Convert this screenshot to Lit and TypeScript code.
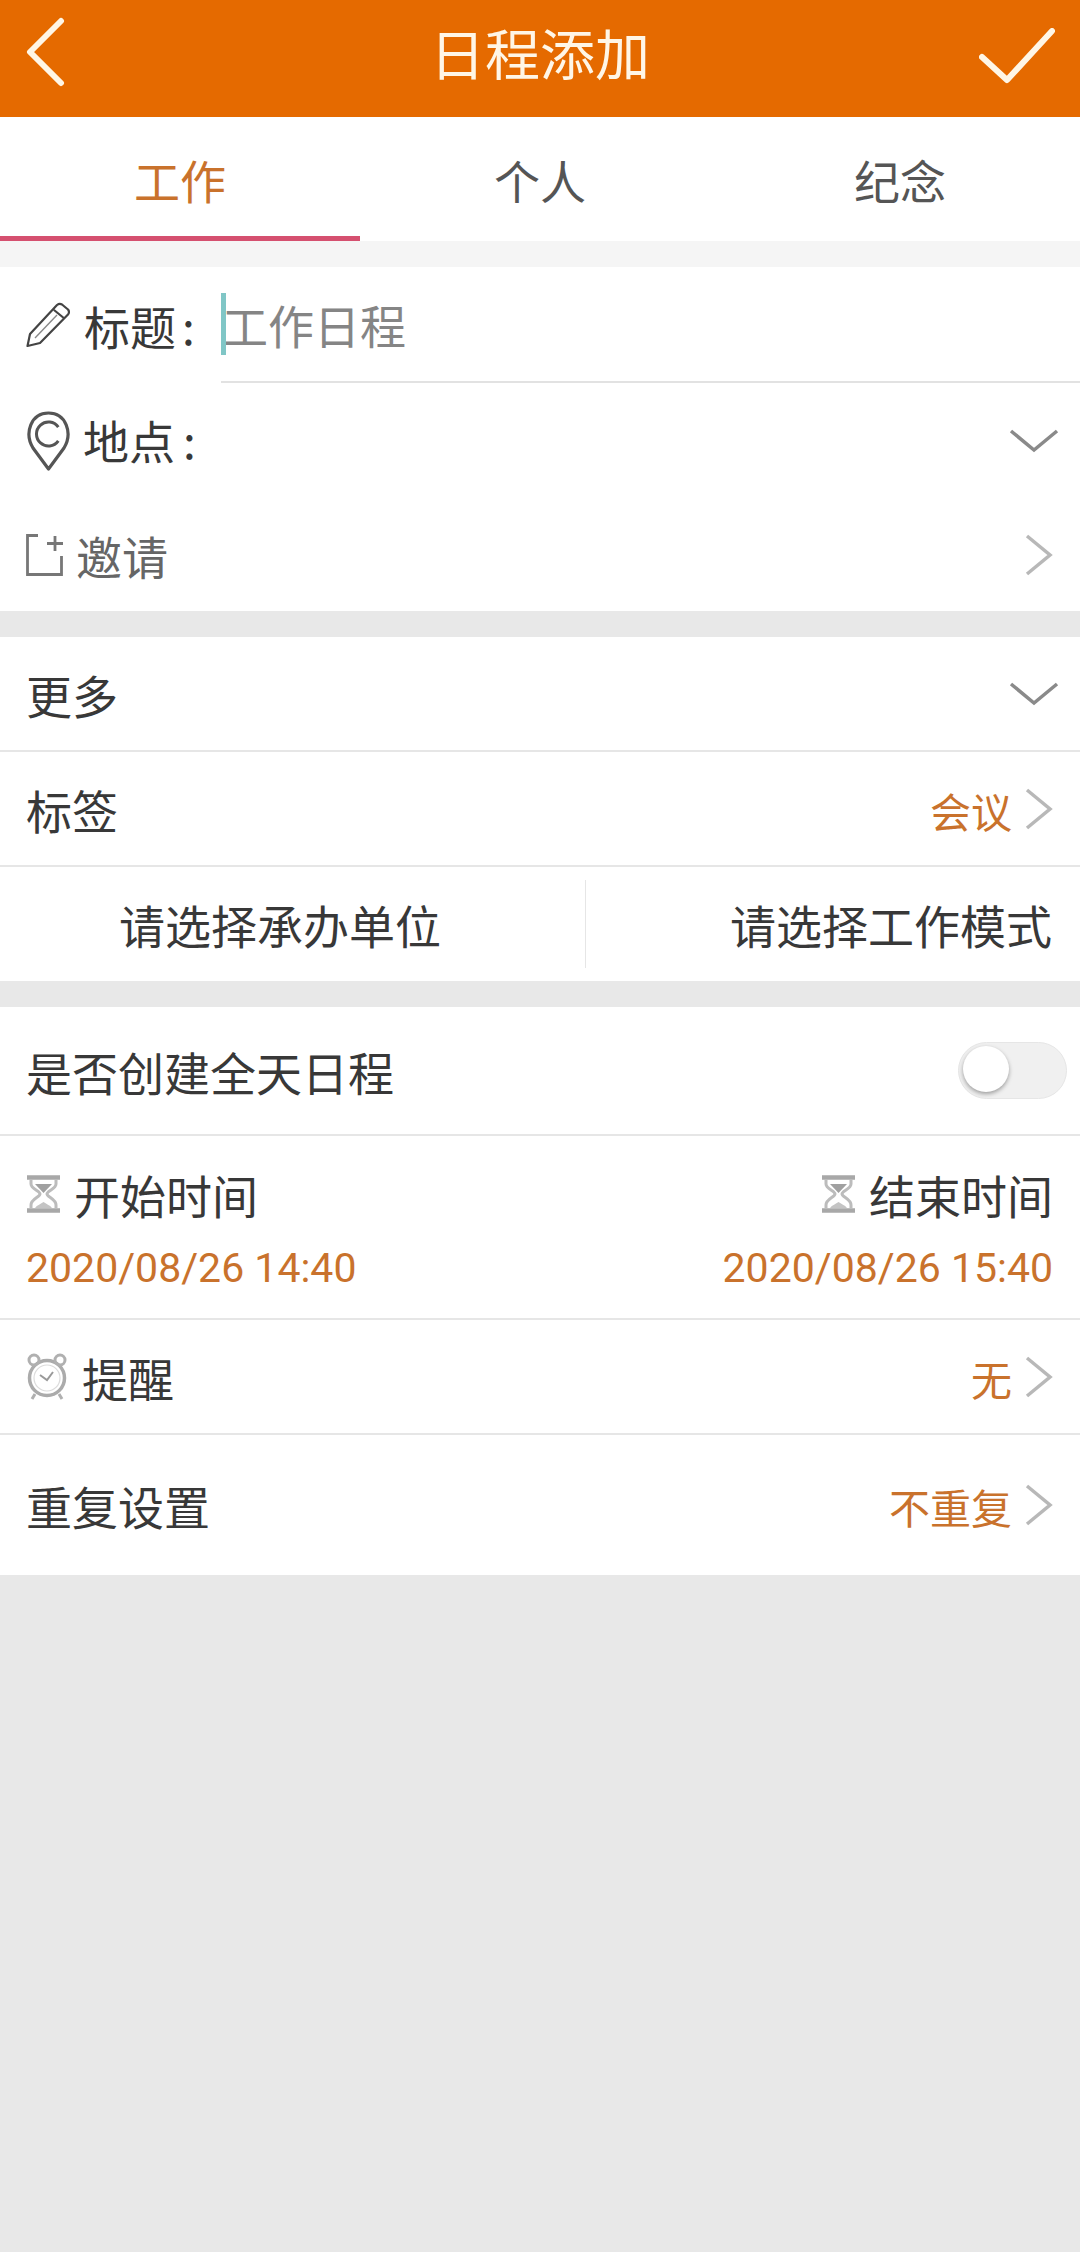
import { LitElement, html, css, svg } from "lit";
import { customElement } from "lit/decorators.js";

const chevron = svg`<svg class="chev" width="28" height="42" viewBox="0 0 28 42"><path d="M2 2 L25 21 L2 40" fill="none" stroke="#b8b8b8" stroke-width="3.500"/></svg>`;
const down = svg`<svg class="down" width="50" height="26" viewBox="0 0 50 26"><path d="M2 3 L25 22 L48 3" fill="none" stroke="#8a8a8a" stroke-width="3.500"/></svg>`;
const hourglass = svg`<svg class="hg" width="35" height="38" viewBox="0 0 35 38"><path d="M1 2.500H34M1 35.500H34" stroke="#a8a8a8" stroke-width="4.500"/><path d="M5 4V9C5 14 14 16 14 19C14 22 5 24 5 30V34M30 4V9C30 14 21 16 21 19C21 22 30 24 30 30V34" fill="none" stroke="#bcbcbc" stroke-width="3"/><path d="M9 9H26L17.500 18Z" fill="#a0a0a0"/><path d="M9 33C11 30 15 29 17.500 27C20 29 24 30 26 33Z" fill="#c4c4c4"/></svg>`;

@customElement("app-root")
export class AppRoot extends LitElement {
  static styles = css`
    :host {
      display: block;
      width: 1080px;
      height: 2252px;
      background: #e8e8e8;
      font-family: "Noto Sans CJK SC", "Noto Sans", sans-serif;
      color: #383838;
      font-size: 46px;
      overflow: hidden;
    }
    svg { display: block; flex: none; }
    .bar {
      height: 117px;
      background: #e56a00;
      color: #fff6e6;
      display: flex;
      align-items: center;
      padding: 0 25px;
    }
    .side { width: 76px; flex: none; display: flex; }
    .side.back { margin-top: -11px; }
    .side.ok { margin-top: -6px; }
    .title { flex: 1; text-align: center; font-size: 55px; line-height: 1; margin-top: -14px; }
    .tabs { height: 124px; background: #fff; display: flex; }
    .tab {
      flex: 1;
      display: flex;
      align-items: center;
      justify-content: center;
      color: #555;
      box-sizing: border-box;
      height: 124px;
      padding-top: 4px;
      padding-bottom: 5px;
    }
    .tab.on {
      color: #c9722c;
      border-bottom: 5px solid #d5506f;
      padding-bottom: 0;
    }
    .strip { height: 26px; background: #f5f5f5; }
    .gap { height: 26px; }
    .card { background: #fff; }
    .row {
      display: flex;
      align-items: center;
      padding: 0 27px 0 26px;
      height: 115px;
      border-bottom: 2px solid #e6e6e6;
      box-sizing: border-box;
    }
    .grow { flex: 1; }
    .val { color: #c9722c; font-size: 41px; margin-right: 13px; margin-top: 2px; }
    .first { height: 344px; display: flex; flex-direction: column; }
    .titleRow { height: 116px; display: flex; padding-left: 26px; }
    .lab { display: flex; align-items: center; height: 116px; width: 195px; flex: none; }
    .input {
      flex: 1;
      height: 116px;
      border-bottom: 2px solid #e2e2e2;
      box-sizing: border-box;
      position: relative;
      display: flex;
      align-items: center;
      color: #858585;
      padding-left: 1px;
    }
    .caret {
      position: absolute;
      left: 0;
      top: 26px;
      width: 5px;
      height: 62px;
      background: #80c6c6;
    }
    .mt { margin-left: 14px; }
    .colon { margin-left: 6px; }
    .loc { height: 116px; padding: 0 21px 0 26px; display: flex; align-items: center; }
    .loc .mt { margin-left: 12px; margin-top: -4px; }
    .loc .colon { margin-top: -4px; margin-left: 8px; }
    .inv { height: 112px; padding: 0 27px 0 26px; display: flex; align-items: center; color: #666; }
    .inv .lbl { margin-left: 13px; }
    .more { padding-right: 21px; }
    .split { padding: 0; height: 114px; border-bottom: none; }
    .s1 { width: 560px; margin-right: 25px; text-align: center; flex: none; }
    .divider { width: 1px; height: 88px; background: #e6e6e6; flex: none; }
    .s2 { flex: 1; text-align: right; padding-right: 28px; }
    .allday { height: 129px; }
    .toggle {
      width: 109px;
      height: 57px;
      border-radius: 29px;
      background: #f0f0f0;
      border: 1px solid #e6e6e6;
      box-sizing: border-box;
      position: relative;
      margin-right: -14px;
    }
    .knob {
      position: absolute;
      left: 4px;
      top: 3px;
      width: 46px;
      height: 46px;
      border-radius: 50%;
      background: #fff;
      box-shadow: 0 2px 4px rgba(0,0,0,.35);
    }
    .times {
      height: 184px;
      padding: 0 27px 0 26px;
      display: flex;
      justify-content: space-between;
      border-bottom: 2px solid #e6e6e6;
      box-sizing: border-box;
    }
    .tcol { display: flex; flex-direction: column; padding-top: 26px; }
    .tcol.r { align-items: flex-end; }
    .thead { display: flex; align-items: center; height: 64px; }
    .thead span { margin-left: 13px; }
    .tval {
      font-family: Roboto, sans-serif;
      font-size: 41px;
      color: #c9722c;
      margin-top: 14px;
      line-height: 56px;
    }
    .remind .lbl { margin-left: 14px; }
    .repeat { height: 140px; border-bottom: none; }
  `;

  render() {
    return html`
      <div class="bar">
        <div class="side back"><svg width="42" height="72" viewBox="0 0 42 72"><path d="M36 4 L5 35 L36 66" fill="none" stroke="#fff6e6" stroke-width="6" stroke-linecap="round" stroke-linejoin="round"/></svg></div>
        <div class="title">日程添加</div>
        <div class="side ok"><svg width="76" height="56" viewBox="0 0 76 56"><path d="M3 29 L28 52 L73 3" fill="none" stroke="#fff6e6" stroke-width="6" stroke-linecap="round" stroke-linejoin="round"/></svg></div>
      </div>
      <div class="tabs">
        <div class="tab on">工作</div>
        <div class="tab">个人</div>
        <div class="tab">纪念</div>
      </div>
      <div class="strip"></div>
      <div class="card first">
        <div class="titleRow">
          <div class="lab">
            <svg width="44" height="46" viewBox="0 0 44 46"><path d="M1.500 44 L4 32 L31 3 Q33.500 1 36 2.500 L42 7.500 Q44 10 42 12.500 L14 41 Z M28 8 L39 17" fill="none" stroke="#444" stroke-width="2.200" stroke-linejoin="round"/><path d="M9 36 L31 13" stroke="#888" stroke-width="1.400"/></svg>
            <span class="mt">标题</span><span class="colon">:</span>
          </div>
          <div class="input"><div class="caret"></div>工作日程</div>
        </div>
        <div class="loc">
          <svg width="45" height="60" viewBox="0 0 45 60"><path d="M22.500 58 L7 37 C-2 22 5 2 22.500 2 C40 2 47 22 38 37 Z" fill="none" stroke="#555" stroke-width="3.200" stroke-linejoin="round"/><path d="M32.300 16.100 A12 12 0 1 0 32.300 29.900" fill="none" stroke="#555" stroke-width="3"/></svg>
          <span class="mt">地点</span><span class="colon">:</span>
          <div class="grow"></div>
          ${down}
        </div>
        <div class="inv">
          <svg width="37" height="42" viewBox="0 0 37 42"><path d="M12 1.500H1.500V40.500H35.500V22" fill="none" stroke="#777" stroke-width="2.800"/><path d="M29 2V17M21 9.500H37" fill="none" stroke="#777" stroke-width="2.800"/></svg>
          <span class="lbl">邀请</span>
          <div class="grow"></div>
          ${chevron}
        </div>
      </div>
      <div class="gap"></div>
      <div class="card">
        <div class="row more"><span>更多</span><div class="grow"></div>${down}</div>
        <div class="row"><span>标签</span><div class="grow"></div><span class="val">会议</span>${chevron}</div>
        <div class="row split">
          <div class="s1">请选择承办单位</div>
          <div class="divider"></div>
          <div class="s2">请选择工作模式</div>
        </div>
      </div>
      <div class="gap"></div>
      <div class="card">
        <div class="row allday"><span>是否创建全天日程</span><div class="grow"></div><div class="toggle"><div class="knob"></div></div></div>
        <div class="times">
          <div class="tcol">
            <div class="thead">${hourglass}<span>开始时间</span></div>
            <div class="tval">2020/08/26 14:40</div>
          </div>
          <div class="tcol r">
            <div class="thead">${hourglass}<span>结束时间</span></div>
            <div class="tval">2020/08/26 15:40</div>
          </div>
        </div>
        <div class="row remind">
          <svg width="42" height="47" viewBox="0 0 42 47"><circle cx="21" cy="25" r="17.500" fill="none" stroke="#ababab" stroke-width="3.500"/><circle cx="21" cy="25" r="13" fill="none" stroke="#dcdcdc" stroke-width="1.200"/><path d="M14 22 L21 27 L27 19" fill="none" stroke="#9a9a9a" stroke-width="2"/><circle cx="8" cy="7" r="5" fill="none" stroke="#b0b0b0" stroke-width="3"/><circle cx="34" cy="7" r="5" fill="none" stroke="#b0b0b0" stroke-width="3"/><path d="M9 41 L6 46M33 41 L36 46" stroke="#b0b0b0" stroke-width="3"/></svg>
          <span class="lbl">提醒</span><div class="grow"></div><span class="val">无</span>${chevron}
        </div>
        <div class="row repeat"><span>重复设置</span><div class="grow"></div><span class="val">不重复</span>${chevron}</div>
      </div>
    `;
  }
}
